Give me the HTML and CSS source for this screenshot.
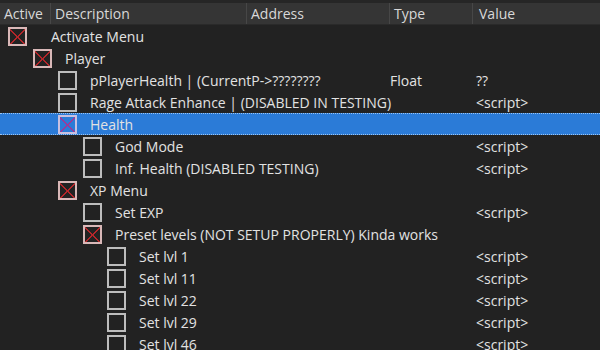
FILE: index.html
```html
<!DOCTYPE html>
<html lang="en">
<head>
  <meta charset="UTF-8">
  <title>Cheat Table</title>
  <link rel="stylesheet" href="styles.css">
</head>
<body>
  <div class="table">
    <!-- column headers -->
    <div class="head">
      <div class="hcell c-active">Active</div>
      <div class="hcell c-desc">Description</div>
      <div class="hcell c-addr">Address</div>
      <div class="hcell c-type">Type</div>
      <div class="hcell c-value">Value</div>
    </div>

    <!-- entries -->
    <div class="row lv0"><div class="name"><span class="box on"></span><span class="txt">Activate Menu</span></div><div class="type"></div><div class="value"></div></div>
    <div class="row lv1"><div class="name"><span class="box on"></span><span class="txt">Player</span></div><div class="type"></div><div class="value"></div></div>
    <div class="row lv2"><div class="name"><span class="box"></span><span class="txt">pPlayerHealth | (CurrentP-&gt;????????</span></div><div class="type">Float</div><div class="value">??</div></div>
    <div class="row lv2"><div class="name"><span class="box"></span><span class="txt">Rage Attack Enhance | (DISABLED IN TESTING)</span></div><div class="type"></div><div class="value">&lt;script&gt;</div></div>
    <div class="row lv2 selected"><div class="name"><span class="box on"></span><span class="txt">Health</span></div><div class="type"></div><div class="value"></div></div>
    <div class="row lv3"><div class="name"><span class="box"></span><span class="txt">God Mode</span></div><div class="type"></div><div class="value">&lt;script&gt;</div></div>
    <div class="row lv3"><div class="name"><span class="box"></span><span class="txt">Inf. Health (DISABLED TESTING)</span></div><div class="type"></div><div class="value">&lt;script&gt;</div></div>
    <div class="row lv2"><div class="name"><span class="box on"></span><span class="txt">XP Menu</span></div><div class="type"></div><div class="value"></div></div>
    <div class="row lv3"><div class="name"><span class="box"></span><span class="txt">Set EXP</span></div><div class="type"></div><div class="value">&lt;script&gt;</div></div>
    <div class="row lv3"><div class="name"><span class="box on"></span><span class="txt">Preset levels (NOT SETUP PROPERLY) Kinda works</span></div><div class="type"></div><div class="value"></div></div>
    <div class="row lv4"><div class="name"><span class="box"></span><span class="txt">Set lvl 1</span></div><div class="type"></div><div class="value">&lt;script&gt;</div></div>
    <div class="row lv4"><div class="name"><span class="box"></span><span class="txt">Set lvl 11</span></div><div class="type"></div><div class="value">&lt;script&gt;</div></div>
    <div class="row lv4"><div class="name"><span class="box"></span><span class="txt">Set lvl 22</span></div><div class="type"></div><div class="value">&lt;script&gt;</div></div>
    <div class="row lv4"><div class="name"><span class="box"></span><span class="txt">Set lvl 29</span></div><div class="type"></div><div class="value">&lt;script&gt;</div></div>
    <div class="row lv4"><div class="name"><span class="box"></span><span class="txt">Set lvl 46</span></div><div class="type"></div><div class="value">&lt;script&gt;</div></div>
  </div>
</body>
</html>
```

FILE: styles.css
```css
body {
  margin: 0;
  background: #222222;
  font-family: "Open Sans", "Noto Sans", sans-serif;
  font-size: 14px;
  color: #e2e2e2;
  overflow: hidden;
}

.table {
  width: 600px;
}

/* header */
.head {
  display: grid;
  grid-template-columns: 51px 196px 143px 83px 1fr;
  height: 21px;
  border-top: 3px solid #262626;
  background: #353535;
  border-bottom: 1px solid #2a2a2a;
}

.hcell {
  line-height: 21px;
  padding-left: 4px;
  border-right: 1px solid #474747;
  color: #d8d8d8;
  white-space: nowrap;
}

.hcell.c-value {
  border-right: none;
  padding-left: 6px;
}

/* rows */
.row {
  display: grid;
  grid-template-columns: 390px 83px 1fr;
  height: 22px;
  align-items: center;
  box-sizing: border-box;
}

.row.selected {
  background: #2b7bd7;
  border-top: 1px dotted #9cc4f0;
  border-bottom: 1px dotted #9cc4f0;
}

.name {
  display: flex;
  align-items: center;
  white-space: nowrap;
}

.type, .value {
  white-space: nowrap;
}

.value {
  padding-left: 3px;
}

.lv0 .name { padding-left: 8px; }
.lv1 .name { padding-left: 33px; }
.lv2 .name { padding-left: 58px; }
.lv3 .name { padding-left: 83px; }
.lv4 .name { padding-left: 107px; }

.lv0 .txt { margin-left: 24px; }

.txt {
  margin-left: 13px;
}

/* checkboxes */
.box {
  display: block;
  width: 19px;
  height: 19px;
  box-sizing: border-box;
  border: 2px solid #bdbdbd;
  flex-shrink: 0;
}

.box.on {
  border-color: #d9b8b8;
  background:
    linear-gradient(45deg, transparent calc(50% - 1px), #b3262a calc(50% - 1px), #b3262a calc(50% + 0.5px), transparent calc(50% + 0.5px)),
    linear-gradient(-45deg, transparent calc(50% - 1px), #b3262a calc(50% - 1px), #b3262a calc(50% + 0.5px), transparent calc(50% + 0.5px));
}

.selected .box.on {
  border-color: #c8c0e0;
  background:
    linear-gradient(45deg, transparent calc(50% - 1px), #9a3a9a calc(50% - 1px), #9a3a9a calc(50% + 0.5px), transparent calc(50% + 0.5px)),
    linear-gradient(-45deg, transparent calc(50% - 1px), #9a3a9a calc(50% - 1px), #9a3a9a calc(50% + 0.5px), transparent calc(50% + 0.5px));
}
```
